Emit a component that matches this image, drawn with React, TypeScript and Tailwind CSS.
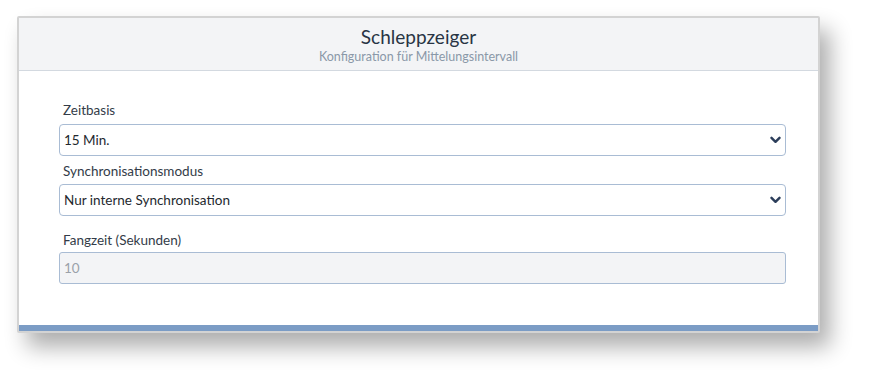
import React from "react";

const Chevron: React.FC = () => (
  <svg width="11" height="8" viewBox="0 0 11 8" className="text-[#2c3e5a]">
    <path d="M1.5 1.8 L5.5 5.8 L9.5 1.8" fill="none" stroke="currentColor" strokeWidth="2.4" strokeLinecap="round" strokeLinejoin="round" />
  </svg>
);

const SelectBox: React.FC<{ value: string }> = ({ value }) => (
  <div className="h-8 w-full flex items-center justify-between rounded-[4px] border border-[#a9bcd4] bg-white pl-[4px] pr-[4px] text-[13.5px] text-[#23282e]">
    <span>{value}</span>
    <Chevron />
  </div>
);

const App: React.FC = () => {
  return (
    <div className="w-[870px] h-[379px] bg-white pt-4 pl-[17px] font-['Lato',sans-serif]">
      <div className="w-[803px] h-[317px] flex flex-col border-2 border-[#d3d3d3] rounded-[2px] bg-white shadow-[10px_14px_22px_rgba(0,0,0,0.32)]">
        <div className="h-[53px] bg-[#f3f4f6] border-b border-[#d3d9e0] flex flex-col items-center pt-[7px]">
          <div className="text-[19px] leading-[24px] text-[#283444]">Schleppzeiger</div>
          <div className="text-[12.5px] leading-[16px] text-[#8a98a8]">Konfiguration für Mittelungsintervall</div>
        </div>
        <div className="flex-1 pl-10 pr-8 pt-[29px]">
          <label className="block h-5 leading-5 pl-1 text-[13.5px] text-[#333c48] mb-1">Zeitbasis</label>
          <SelectBox value="15 Min." />
          <label className="block h-5 leading-5 pl-1 text-[13.5px] text-[#333c48] mt-[5px] mb-[3px]">Synchronisationsmodus</label>
          <SelectBox value="Nur interne Synchronisation" />
          <label className="block h-5 leading-5 pl-1 text-[13.5px] text-[#333c48] mt-[14px] mb-[2px]">Fangzeit (Sekunden)</label>
          <div className="h-8 w-full flex items-center rounded-[3px] border border-[#a9bcd4] bg-[#f3f4f6] pl-[4px] text-[13.5px] text-[#9aa1a9]">
            10
          </div>
        </div>
        <div className="h-[6px] bg-[#7b9cc5]" />
      </div>
    </div>
  );
};

export default App;
